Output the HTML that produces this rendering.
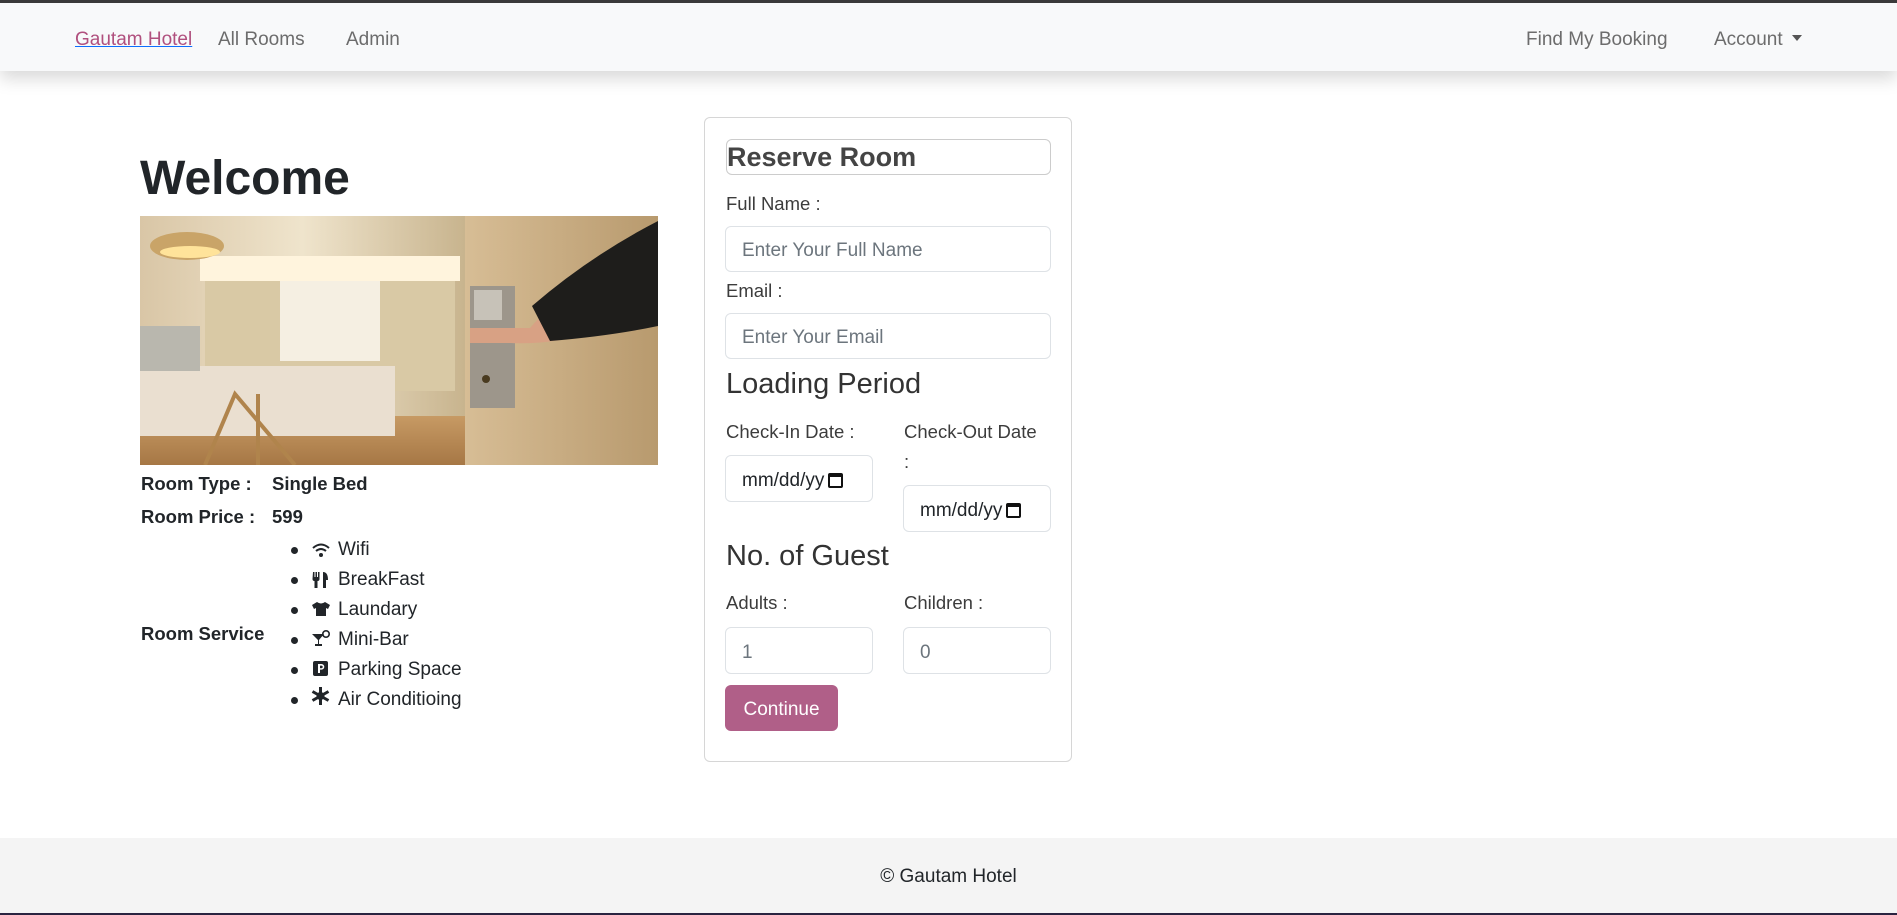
<!DOCTYPE html>
<html><head><meta charset="utf-8">
<style>
*{box-sizing:border-box;margin:0;padding:0}
body{width:1897px;height:915px;overflow:hidden;background:#fff;font-family:"Liberation Sans",sans-serif;color:#212529;position:relative}
.a{position:absolute;white-space:nowrap}
.nav{position:absolute;left:0;top:0;width:1897px;height:71px;background:#f8f9fa;border-top:3px solid #3a3a3a;box-shadow:0 8px 16px rgba(0,0,0,.15)}
.nl{font-size:19px;color:#6c6c6c;top:29px}
.inp{position:absolute;border:1px solid #dee2e6;border-radius:6px;background:#fff;font-size:19px;color:#6c757d;padding-left:16px;padding-top:4px;display:flex;align-items:center}
.lbl{font-size:18.5px;color:#3c3c3c}
.h{font-size:29px;color:#333}
.b{font-weight:bold;font-size:18.5px}
.li{font-size:19px;color:#212529}
.dot{position:absolute;width:7px;height:7px;border-radius:50%;background:#212529}
</style></head><body>
<div class="nav"></div>
<div class="a nl" style="left:75px;color:#b0507e;text-decoration:underline;text-decoration-color:#0d6efd">Gautam Hotel</div>
<div class="a nl" style="left:218px">All Rooms</div>
<div class="a nl" style="left:346px">Admin</div>
<div class="a nl" style="left:1526px">Find My Booking</div>
<div class="a nl" style="left:1714px">Account</div>
<div class="a" style="left:1792px;top:35px;width:0;height:0;border-left:5px solid transparent;border-right:5px solid transparent;border-top:6px solid #555"></div>

<div class="a" style="left:140px;top:151px;font-size:48px;font-weight:bold;color:#212529">Welcome</div>
<svg class="a" style="left:140px;top:216px" width="518" height="249" viewBox="0 0 518 249">
<defs>
<linearGradient id="w" x1="0" x2="1"><stop offset="0" stop-color="#d9c6a6"/><stop offset=".5" stop-color="#efe4cc"/><stop offset="1" stop-color="#c8b48e"/></linearGradient>
<linearGradient id="d" x1="0" x2="1"><stop offset="0" stop-color="#d7bd95"/><stop offset="1" stop-color="#b89a6e"/></linearGradient>
<linearGradient id="fl" y1="0" y2="1" x1="0" x2="0"><stop offset="0" stop-color="#c79a64"/><stop offset="1" stop-color="#a67745"/></linearGradient>
</defs>
<rect width="325" height="249" fill="url(#w)"/>
<rect x="60" y="40" width="260" height="25" fill="#fff4dd"/>
<rect x="65" y="65" width="250" height="110" fill="#d9c9a5"/>
<rect x="140" y="65" width="100" height="80" fill="#f5efe2"/>
<rect x="0" y="200" width="325" height="49" fill="url(#fl)"/>
<rect x="0" y="150" width="255" height="70" fill="#eadfd0"/>
<rect x="0" y="110" width="60" height="45" fill="#b9b7ae"/>
<ellipse cx="47" cy="30" rx="37" ry="14" fill="#c9a468"/>
<ellipse cx="50" cy="36" rx="30" ry="6" fill="#ffe39a"/>
<path d="M65 249 L95 178 L155 249" stroke="#b0844c" stroke-width="4" fill="none"/>
<path d="M118 178 V249" stroke="#b0844c" stroke-width="4"/>
<rect x="325" width="193" height="249" fill="url(#d)"/>
<rect x="330" y="70" width="45" height="122" fill="#9d968b"/>
<rect x="334" y="74" width="28" height="30" fill="#c7c2b8"/>
<path d="M330 112 h60 q20 -25 50 -25 l10 30 q-40 12 -80 10 h-40z" fill="#d8a184"/>
<path d="M392 90 Q450 40 518 5 V110 Q470 120 410 125 Z" fill="#1e1d1b"/>
<circle cx="346" cy="163" r="4" fill="#4a3b20"/>
</svg>

<div class="a b" style="left:141px;top:473px">Room Type :</div>
<div class="a b" style="left:272px;top:473px">Single Bed</div>
<div class="a b" style="left:141px;top:506px">Room Price :</div>
<div class="a b" style="left:272px;top:506px">599</div>
<div class="a b" style="left:141px;top:623px">Room Service</div>
<div class="dot" style="left:291px;top:547px"></div>
<div class="dot" style="left:291px;top:577px"></div>
<div class="dot" style="left:291px;top:607px"></div>
<div class="dot" style="left:291px;top:637px"></div>
<div class="dot" style="left:291px;top:667px"></div>
<div class="dot" style="left:291px;top:697px"></div>
<svg class="a" style="left:311px;top:542px" width="20" height="170" viewBox="0 0 20 170" fill="#212529">
<path d="M2 6 Q10 -1 18 6" stroke="#212529" stroke-width="2" fill="none"/><path d="M5 9 Q10 5 15 9" stroke="#212529" stroke-width="2" fill="none"/><circle cx="10" cy="13" r="2"/>
<path d="M2 30h1.5v5h1v-5h1.5v5h1v-5h1.5v7q0 2-2 2v7h-3v-7q-2 0-2-2z M12 30q5 0 5 8h-2v8h-3z"/>
<path d="M6 60 L1 63 L3 67 L5 66 V74 H15 V66 L17 67 L19 63 L14 60 Q10 63 6 60Z"/>
<path d="M1 92 H13 L8 98 V102 H11 V104 H4 V102 H7 V98Z"/><circle cx="15" cy="92" r="3.2" stroke="#212529" stroke-width="1.6" fill="none"/>
<rect x="2" y="119" width="15" height="15" rx="2"/><path d="M7 122 h3.5 a2.8 2.8 0 0 1 0 5.6 H9 V131 H7z M9 123.6 v2.6 h1.4 a1.3 1.3 0 0 0 0-2.6z" fill="#fff"/>
<path d="M9.5 145 V163 M1.5 149.5 L17.5 158.5 M1.5 158.5 L17.5 149.5" stroke="#212529" stroke-width="3"/><circle cx="9.5" cy="154" r="4"/>
</svg>
<div class="a li" style="left:338px;top:539px">Wifi</div>
<div class="a li" style="left:338px;top:569px">BreakFast</div>
<div class="a li" style="left:338px;top:599px">Laundary</div>
<div class="a li" style="left:338px;top:629px">Mini-Bar</div>
<div class="a li" style="left:338px;top:659px">Parking Space</div>
<div class="a li" style="left:338px;top:689px">Air Conditioing</div>

<div class="a" style="left:704px;top:117px;width:368px;height:645px;border:1px solid #d6d6d6;border-radius:6px"></div>
<div class="a" style="left:726px;top:139px;width:325px;height:36px;border:1px solid #ccc;border-radius:6px"></div>
<div class="a h" style="left:727px;top:142px;font-size:27px;font-weight:bold;color:#444">Reserve Room</div>
<div class="a lbl" style="left:726px;top:193px">Full Name :</div>
<div class="inp" style="left:725px;top:226px;width:326px;height:46px">Enter Your Full Name</div>
<div class="a lbl" style="left:726px;top:280px">Email :</div>
<div class="inp" style="left:725px;top:313px;width:326px;height:46px">Enter Your Email</div>
<div class="a h" style="left:726px;top:368px">Loading Period</div>
<div class="a lbl" style="left:726px;top:421px">Check-In Date :</div>
<div class="a lbl" style="left:904px;top:421px">Check-Out Date</div>
<div class="a lbl" style="left:904px;top:451px">:</div>
<div class="inp" style="left:725px;top:455px;width:148px;height:47px;color:#212529">mm/dd/yy<span style="display:inline-block;width:15px;height:15px;border:2px solid #111;border-top-width:4px;margin-left:4px;border-radius:2px"></span></div>
<div class="inp" style="left:903px;top:485px;width:148px;height:47px;color:#212529">mm/dd/yy<span style="display:inline-block;width:15px;height:15px;border:2px solid #111;border-top-width:4px;margin-left:4px;border-radius:2px"></span></div>
<div class="a h" style="left:726px;top:540px">No. of Guest</div>
<div class="a lbl" style="left:726px;top:592px">Adults :</div>
<div class="a lbl" style="left:904px;top:592px">Children :</div>
<div class="inp" style="left:725px;top:627px;width:148px;height:47px">1</div>
<div class="inp" style="left:903px;top:627px;width:148px;height:47px">0</div>
<div class="a" style="left:725px;top:685px;width:113px;height:46px;background:#b05f88;border-radius:6px;color:#fff;font-size:19px;display:flex;align-items:center;justify-content:center;padding-top:3px">Continue</div>

<div class="a" style="left:0;top:838px;width:1897px;height:77px;background:#f4f4f4"></div>
<div class="a" style="left:0;top:866px;width:1897px;text-align:center;font-size:19px;color:#212529">© Gautam Hotel</div>
<div class="a" style="left:0;top:913px;width:1897px;height:2px;background:#2a2340"></div>
</body></html>
